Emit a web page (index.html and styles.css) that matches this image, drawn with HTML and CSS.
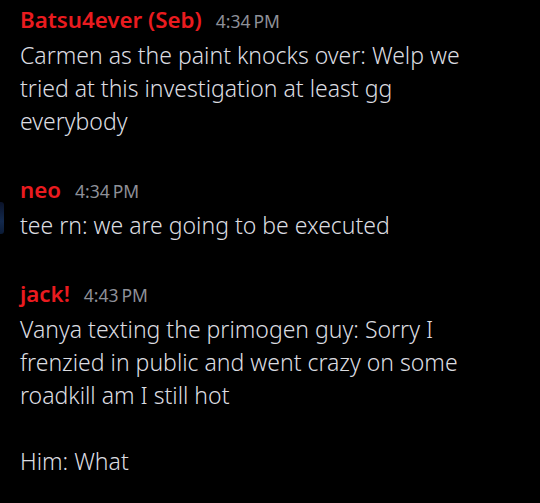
FILE: index.html
```html
<!DOCTYPE html>
<html>
<head>
<meta charset="utf-8">
<link rel="stylesheet" href="styles.css">
</head>
<body>
<div class="chat">
  <div class="msg">
    <div class="gutter"></div>
    <div class="content">
      <div class="header"><span class="name">Batsu4ever (Seb)</span><span class="time">4:34&#8239;PM</span></div>
      <div class="text">Carmen as the paint knocks over: Welp we tried at this investigation at least gg everybody</div>
    </div>
  </div>
  <div class="msg">
    <div class="gutter"><div class="avatar-edge"></div></div>
    <div class="content">
      <div class="header"><span class="name">neo</span><span class="time">4:34&#8239;PM</span></div>
      <div class="text">tee rn: we are going to be executed</div>
    </div>
  </div>
  <div class="msg">
    <div class="gutter"></div>
    <div class="content">
      <div class="header"><span class="name">jack!</span><span class="time">4:43&#8239;PM</span></div>
      <div class="text">Vanya texting the primogen guy: Sorry I frenzied in public and went crazy on some roadkill am I still hot<br><br>Him: What</div>
    </div>
  </div>
</div>
</body>
</html>
```
FILE: styles.css
```css
html, body {
  margin: 0;
  padding: 0;
  background: #000;
}
body {
  width: 540px;
  height: 503px;
  overflow: hidden;
  font-family: "Noto Sans", "Open Sans", sans-serif;
}
.chat {
  display: flex;
  flex-direction: column;
  gap: 34px;
  padding-top: 2px;
}
.msg {
  display: flex;
}
.gutter {
  width: 20px;
  flex: none;
  display: flex;
  align-items: flex-end;
}
.avatar-edge {
  width: 4px;
  height: 32px;
  margin-bottom: 8px;
  border-radius: 0 3px 3px 0;
  background: linear-gradient(180deg, #0a1228, #13294d 60%, #0b1b36);
}
.content {
  flex: none;
  width: 470px;
}
.header {
  display: flex;
  align-items: baseline;
  gap: 14px;
  line-height: 36px;
}
.name {
  color: #ea1b1f;
  font-size: 22.3px;
  font-weight: 600;
}
.time {
  color: #8e9098;
  font-size: 17.5px;
  font-weight: 400;
}
.text {
  color: #dcdde1;
  font-size: 23px;
  font-weight: 300;
  line-height: 33px;
}
```
